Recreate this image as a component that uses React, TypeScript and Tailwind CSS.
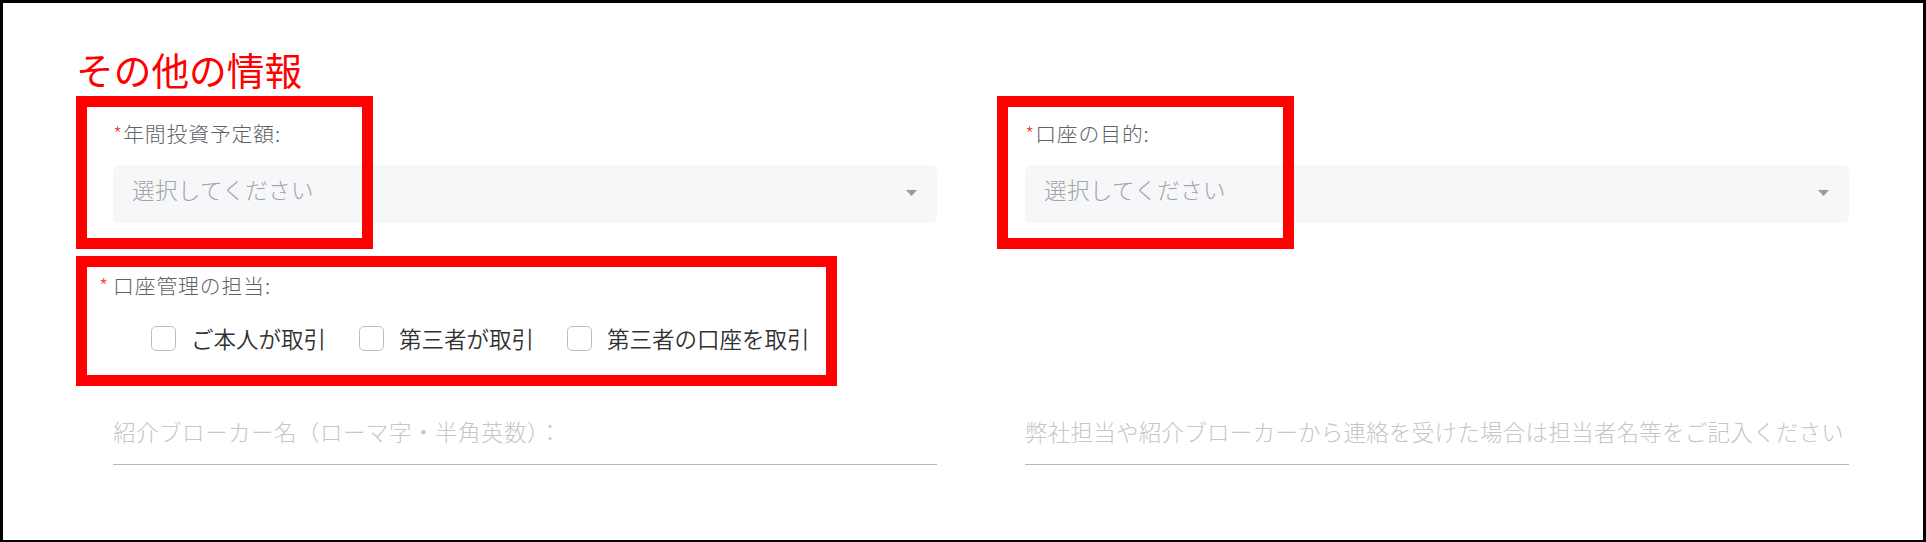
function Req() {
  return <span className="text-[#f23c3c]">*</span>
}

function SelectBox() {
  return (
    <div className="mt-[20px] h-[58px] rounded-[6px] bg-[#f6f7f9] flex items-center justify-between pl-[19px] pr-[20px]">
      <span className="mb-[10px] text-[22.5px] leading-[30px] tracking-[0.4px] text-[#a0a3a8]">選択してください</span>
      <svg width="11" height="6" viewBox="0 0 11 6" className="mt-[-2px]">
        <polygon points="0,0 11,0 5.5,6" fill="#9a9a9a" />
      </svg>
    </div>
  )
}

function Check({ label }: { label: string }) {
  return (
    <label className="flex items-center gap-[15px]">
      <span className="w-[25px] h-[25px] rounded-[5px] border border-[#b6bfcc] bg-white" />
      <span className="text-[22.5px] leading-[25px] font-[350] text-[#303133]">{label}</span>
    </label>
  )
}

function LineInput({ placeholder, track }: { placeholder: string; track: string }) {
  return (
    <div className="mt-[50px] pt-[15px] pb-[18px] border-b border-[#b8b8b8] overflow-hidden">
      <div className={`text-[22.5px] leading-[30px] text-[#c4c6ca] whitespace-nowrap ${track}`}>{placeholder}</div>
    </div>
  )
}

export default function App() {
  return (
    <div className="relative w-[1926px] h-[542px] border-[3px] border-b-2 border-black bg-white overflow-hidden font-light font-['Noto_Sans_CJK_JP','Noto_Sans',sans-serif]">
      <h2 className="mt-[47px] ml-[73px] text-[37.7px] leading-[38px] text-[#ff0000] font-normal">その他の情報</h2>

      <div className="ml-[110px] grid grid-cols-[824px_824px] gap-x-[88px]">
        {/* row 1 */}
        <div className="mt-[33px]">
          <div className="text-[20.8px] leading-[24px] tracking-[0.9px] text-[#606266]">
            <Req />年間投資予定額:
          </div>
          <SelectBox />
        </div>
        <div className="mt-[33px]">
          <div className="text-[20.8px] leading-[24px] tracking-[0.9px] text-[#606266]">
            <Req />口座の目的:
          </div>
          <SelectBox />
        </div>

        {/* row 2 */}
        <div className="mt-[50px]">
          <div className="flex text-[20.8px] leading-[24px] tracking-[0.9px] text-[#606266]">
            <span className="-ml-[14px] w-[14px] text-[#f23c3c]">*</span>
            <span>口座管理の担当:</span>
          </div>
          <div className="mt-[29px] ml-[38px] flex items-center gap-[33px]">
            <Check label="ご本人が取引" />
            <Check label="第三者が取引" />
            <Check label="第三者の口座を取引" />
          </div>
        </div>
        <div />

        {/* row 3 */}
        <LineInput placeholder="紹介ブローカー名（ローマ字・半角英数）：" track="tracking-[0.5px]" />
        <LineInput placeholder="弊社担当や紹介ブローカーから連絡を受けた場合は担当者名等をご記入ください" track="tracking-[0.25px]" />
      </div>

      {/* annotation boxes */}
      <div className="absolute left-[73px] top-[93px] w-[297px] h-[153px] border-[11px] border-[#ff0000]" />
      <div className="absolute left-[73px] top-[253px] w-[761px] h-[130px] border-[11px] border-[#ff0000]" />
      <div className="absolute left-[994px] top-[93px] w-[297px] h-[153px] border-[11px] border-[#ff0000]" />
    </div>
  )
}
